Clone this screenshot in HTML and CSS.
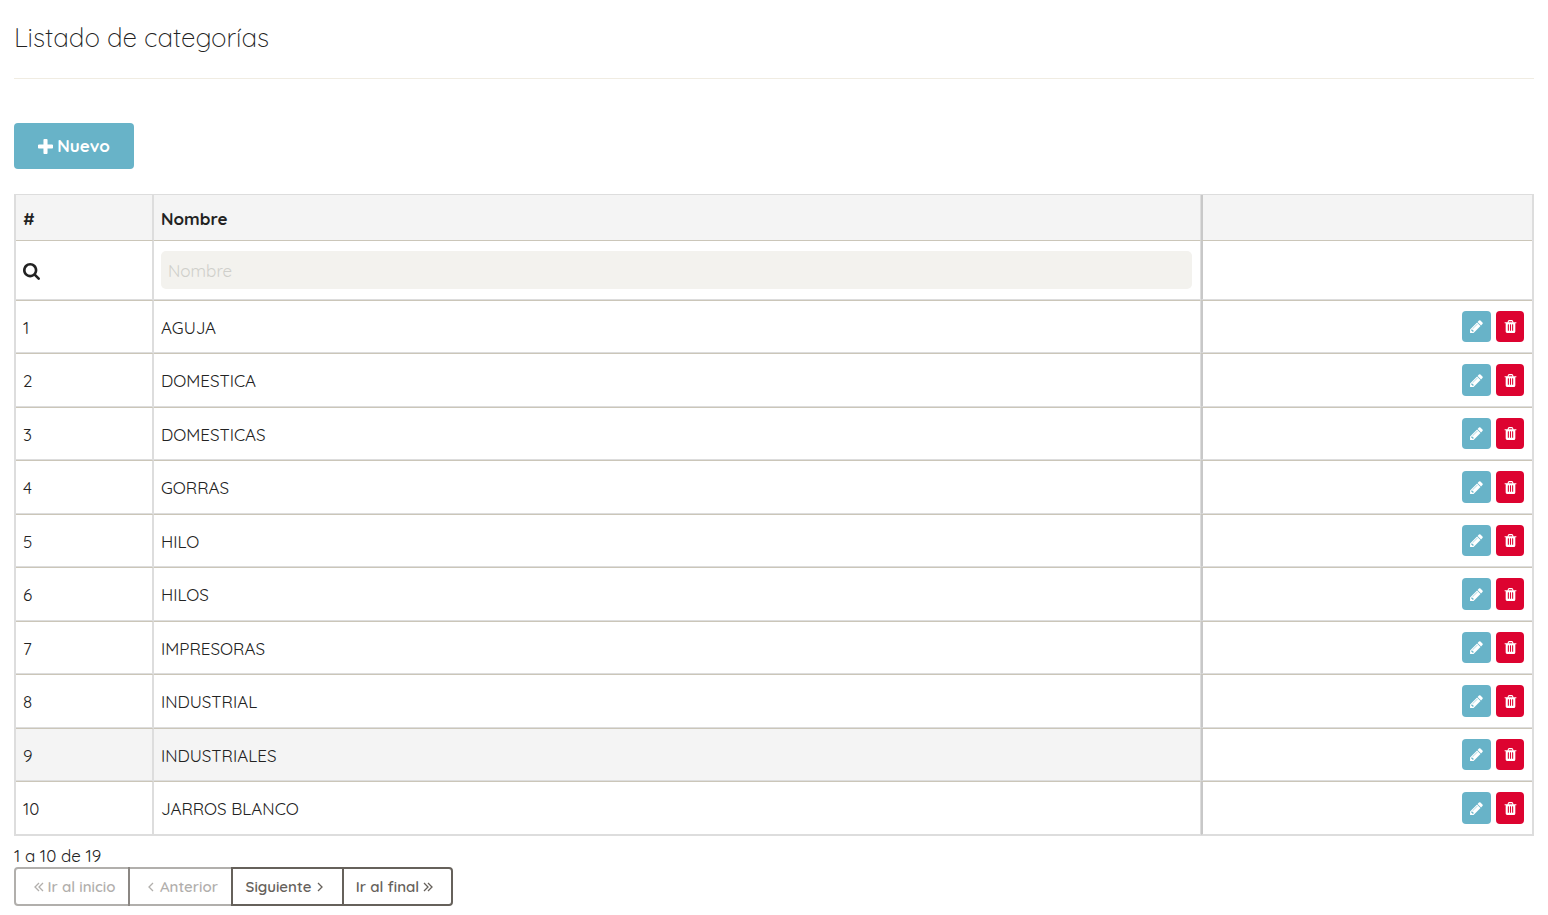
FILE: index.html
```html
<!DOCTYPE html>
<html lang="es">
<head>
<meta charset="utf-8">
<title>Listado de categorías</title>
<link rel="stylesheet" href="styles.css">
</head>
<body>
<svg class="sprite" aria-hidden="true">
  <symbol id="i-plus" viewBox="192 128 1408 1408"><path d="M1600 736v192q0 40-28 68t-68 28h-416v416q0 40-28 68t-68 28h-192q-40 0-68-28t-28-68v-416h-416q-40 0-68-28t-28-68v-192q0-40 28-68t68-28h416v-416q0-40 28-68t68-28h192q40 0 68 28t28 68v416h416q40 0 68 28t28 68z"/></symbol>
  <symbol id="i-search" viewBox="64 128 1664 1664"><path d="M1216 832q0-185-131.5-316.5t-316.5-131.5-316.5 131.5-131.5 316.5 131.5 316.5 316.5 131.5 316.5-131.5 131.5-316.5zm512 832q0 52-38 90t-90 38q-54 0-90-38l-343-342q-179 124-399 124-143 0-273.5-55.5t-225-150-150-225-55.5-273.5 55.5-273.5 150-225 225-150 273.5-55.5 273.5 55.5 225 150 150 225 55.5 273.5q0 220-124 399l343 343q37 37 37 90z"/></symbol>
  <symbol id="i-pencil" viewBox="0 0 1792 1792"><path d="M491 1536l91-91-235-235-91 91v107h128v128h107zm523-928q0-22-22-22-10 0-17 7l-542 542q-7 7-7 17 0 22 22 22 10 0 17-7l542-542q7-7 7-17zm-54-192l416 416-832 832h-416v-416zm683 96q0 53-37 90l-166 166-416-416 166-165q36-38 90-38 53 0 91 38l235 234q37 39 37 91z"/></symbol>
  <symbol id="i-trash" viewBox="0 0 1792 1792"><path d="M704 1376v-704q0-14-9-23t-23-9h-64q-14 0-23 9t-9 23v704q0 14 9 23t23 9h64q14 0 23-9t9-23zm256 0v-704q0-14-9-23t-23-9h-64q-14 0-23 9t-9 23v704q0 14 9 23t23 9h64q14 0 23-9t9-23zm256 0v-704q0-14-9-23t-23-9h-64q-14 0-23 9t-9 23v704q0 14 9 23t23 9h64q14 0 23-9t9-23zm-544-992h448l-48-117q-7-9-17-11h-317q-10 2-17 11zm928 32v64q0 14-9 23t-23 9h-96v948q0 83-47 143.5t-113 60.5h-832q-66 0-113-58.5t-47-141.5v-952h-96q-14 0-23-9t-9-23v-64q0-14 9-23t23-9h309l70-167q15-37 54-63t79-26h320q40 0 79 26t54 63l70 167h309q14 0 23 9t9 23z"/></symbol>
  <symbol id="i-left" viewBox="0 0 6 10"><path class="line" d="M5 1L1 5l4 4"/></symbol>
  <symbol id="i-right" viewBox="0 0 6 10"><path class="line" d="M1 1l4 4-4 4"/></symbol>
  <symbol id="i-first" viewBox="0 0 10 10"><path class="line" d="M5 1L1 5l4 4M9 1L5 5l4 4"/></symbol>
  <symbol id="i-last" viewBox="0 0 10 10"><path class="line" d="M1 1l4 4-4 4M5 1l4 4-4 4"/></symbol>
</svg>
<main class="page">
  <h1 class="title">Listado de categorías</h1>
  <button class="btn-new" type="button"><svg class="icon-plus"><use href="#i-plus"/></svg>Nuevo</button>

  <table class="grid">
    <colgroup><col class="col-id"><col><col class="col-actions"></colgroup>
    <thead>
      <tr class="head"><th scope="col">#</th><th scope="col">Nombre</th><th class="actions"></th></tr>
      <tr class="filter"><td><svg class="icon-search"><use href="#i-search"/></svg></td><td><input class="search" type="text" placeholder="Nombre" aria-label="Nombre"></td><td class="actions"></td></tr>
    </thead>
    <tbody>
      <tr><td>1</td><td>AGUJA</td><td class="actions"><div class="tools"><button class="tool edit" type="button" aria-label="Editar"><svg><use href="#i-pencil"/></svg></button><button class="tool delete" type="button" aria-label="Eliminar"><svg><use href="#i-trash"/></svg></button></div></td></tr>
      <tr><td>2</td><td>DOMESTICA</td><td class="actions"><div class="tools"><button class="tool edit" type="button" aria-label="Editar"><svg><use href="#i-pencil"/></svg></button><button class="tool delete" type="button" aria-label="Eliminar"><svg><use href="#i-trash"/></svg></button></div></td></tr>
      <tr><td>3</td><td>DOMESTICAS</td><td class="actions"><div class="tools"><button class="tool edit" type="button" aria-label="Editar"><svg><use href="#i-pencil"/></svg></button><button class="tool delete" type="button" aria-label="Eliminar"><svg><use href="#i-trash"/></svg></button></div></td></tr>
      <tr><td>4</td><td>GORRAS</td><td class="actions"><div class="tools"><button class="tool edit" type="button" aria-label="Editar"><svg><use href="#i-pencil"/></svg></button><button class="tool delete" type="button" aria-label="Eliminar"><svg><use href="#i-trash"/></svg></button></div></td></tr>
      <tr><td>5</td><td>HILO</td><td class="actions"><div class="tools"><button class="tool edit" type="button" aria-label="Editar"><svg><use href="#i-pencil"/></svg></button><button class="tool delete" type="button" aria-label="Eliminar"><svg><use href="#i-trash"/></svg></button></div></td></tr>
      <tr><td>6</td><td>HILOS</td><td class="actions"><div class="tools"><button class="tool edit" type="button" aria-label="Editar"><svg><use href="#i-pencil"/></svg></button><button class="tool delete" type="button" aria-label="Eliminar"><svg><use href="#i-trash"/></svg></button></div></td></tr>
      <tr><td>7</td><td>IMPRESORAS</td><td class="actions"><div class="tools"><button class="tool edit" type="button" aria-label="Editar"><svg><use href="#i-pencil"/></svg></button><button class="tool delete" type="button" aria-label="Eliminar"><svg><use href="#i-trash"/></svg></button></div></td></tr>
      <tr><td>8</td><td>INDUSTRIAL</td><td class="actions"><div class="tools"><button class="tool edit" type="button" aria-label="Editar"><svg><use href="#i-pencil"/></svg></button><button class="tool delete" type="button" aria-label="Eliminar"><svg><use href="#i-trash"/></svg></button></div></td></tr>
      <tr class="active"><td>9</td><td>INDUSTRIALES</td><td class="actions"><div class="tools"><button class="tool edit" type="button" aria-label="Editar"><svg><use href="#i-pencil"/></svg></button><button class="tool delete" type="button" aria-label="Eliminar"><svg><use href="#i-trash"/></svg></button></div></td></tr>
      <tr><td>10</td><td>JARROS BLANCO</td><td class="actions"><div class="tools"><button class="tool edit" type="button" aria-label="Editar"><svg><use href="#i-pencil"/></svg></button><button class="tool delete" type="button" aria-label="Eliminar"><svg><use href="#i-trash"/></svg></button></div></td></tr>
    </tbody>
  </table>

  <p class="count">1 a 10 de 19</p>
  <nav class="pager" aria-label="Paginación">
    <button class="page-btn back first" type="button" disabled><svg class="double"><use href="#i-first"/></svg>Ir al inicio</button>
    <button class="page-btn back prev" type="button" disabled><svg class="single"><use href="#i-left"/></svg>Anterior</button>
    <button class="page-btn forward next" type="button">Siguiente<svg class="single"><use href="#i-right"/></svg></button>
    <button class="page-btn forward last" type="button">Ir al final<svg class="double"><use href="#i-last"/></svg></button>
  </nav>
</main>
</body>
</html>
```
FILE: styles.css
```css
* { box-sizing: border-box; }
body {
  margin: 0;
  background: #fff;
  color: #222;
  font: 400 17px/24px Quicksand, Lato, sans-serif;
}
button, input { font: inherit; margin: 0; }
button { border: 0; padding: 0; display: inline-flex; align-items: center; justify-content: center; }
svg { fill: currentColor; flex: none; display: block; }
.sprite { display: none; }
.line { fill: none; stroke: currentColor; stroke-width: 1.3; }

.page { padding: 0 14px; }
.title {
  margin: 0 0 44px;
  padding: 20px 0 22px;
  border-bottom: 1px solid #f0ece2;
  font-size: 26px;
  line-height: 36px;
  font-weight: 300;
}
.btn-new {
  display: flex;
  gap: 4px;
  min-width: 120px;
  width: max-content;
  height: 46px;
  margin-bottom: 25px;
  border-radius: 4px;
  background: #68b3c8;
  color: #fff;
  font-weight: 700;
}
.icon-plus { width: 15px; height: 15px; }
.icon-search { width: 17px; height: 17px; }

.grid {
  width: 100%;
  table-layout: fixed;
  border-collapse: separate;
  border-spacing: 0;
  border: 2px solid #ddd;
  border-top-width: 1px;
  border-bottom-width: 1px;
}
.col-id { width: 9.1%; }
.col-actions { width: 21.85%; }
.grid th, .grid td {
  padding: 0 8px;
  text-align: left;
  vertical-align: middle;
}
.grid th:first-child, .grid td:first-child { padding-left: 7px; border-right: 2px solid #ddd; }
.grid th:nth-child(2), .grid td:nth-child(2) { padding-left: 7px; border-right: 1px solid #ddd; }
.grid th, .grid td:first-child, .grid tbody td:nth-child(2) { padding-top: 2px; }
.grid td { border-top: 1px solid #cbc6b9; border-bottom: 1px solid #ddd; }
.grid .actions { border-left: 2px solid #c8c8c8; }
.head { height: 45px; background: #f4f4f4; }
.head th { font-weight: 700; }
.filter { height: 60px; }
.search {
  display: block;
  width: 100%;
  height: 38px;
  padding: 0 7px;
  border: 0;
  border-radius: 5px;
  background: #f3f2ee;
  color: #222;
}
.search::placeholder { color: #cfcfca; opacity: 1; }
.grid tbody tr { height: 53px; }
.grid tbody tr:nth-child(even) { height: 54px; }
.active td:not(.actions) { background: #f4f4f4; }
.tools { display: flex; justify-content: flex-end; gap: 5px; }
.tool { height: 31px; border-radius: 4px; color: #fff; }
tr:nth-child(even) .tool { height: 32px; }
.tool svg { width: 15px; height: 15px; }
.edit { width: 29px; background: #68b3c8; }
.delete { width: 28px; background: #dd0330; }

.count { margin: 8px 0 0; line-height: 23px; }
.pager { display: flex; }
.page-btn {
  height: 39px;
  gap: 4px;
  border: 2px solid #66615b;
  background: transparent;
  color: #66615b;
  font-size: 15px;
  line-height: 20px;
  font-weight: 600;
}
.page-btn + .page-btn { margin-left: -2px; }
.page-btn:disabled { opacity: .5; }
.back { padding-left: 5px; }
.forward { padding-right: 6px; }
.first { min-width: 116px; border-radius: 4px 0 0 4px; }
.prev { min-width: 105px; gap: 6px; }
.next { min-width: 113px; gap: 6px; }
.last { min-width: 111px; border-radius: 0 4px 4px 0; }
.single { width: 6px; height: 10px; }
.double { width: 10px; height: 10px; }
```
